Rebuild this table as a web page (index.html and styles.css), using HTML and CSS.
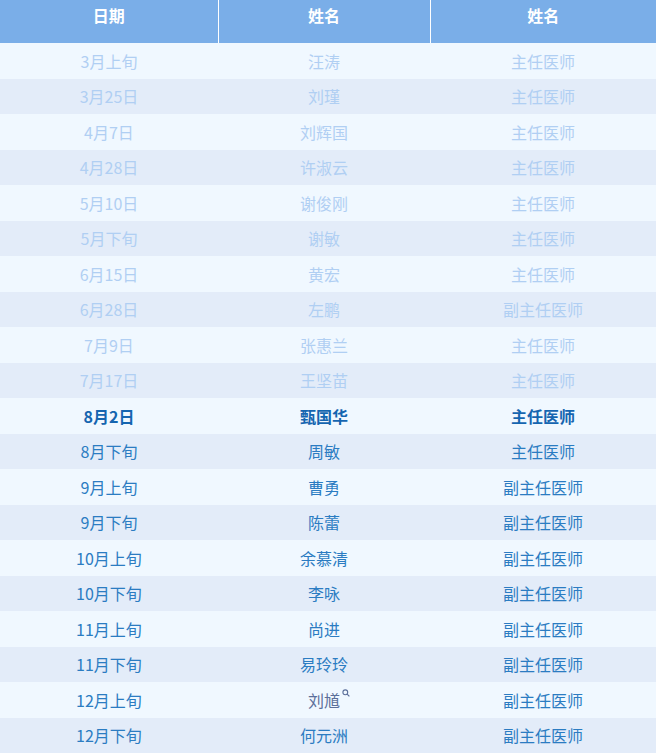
FILE: index.html
```html
<!DOCTYPE html>
<html lang="zh">
<head>
<meta charset="utf-8">
<link rel="stylesheet" href="styles.css">
</head>
<body>
<table class="sched">
  <colgroup><col class="c1"><col class="c2"><col class="c3"></colgroup>
  <thead>
    <tr><th>日期</th><th>姓名</th><th>姓名</th></tr>
  </thead>
  <tbody>
    <tr class="past"><td>3月上旬</td><td>汪涛</td><td>主任医师</td></tr>
    <tr class="past"><td>3月25日</td><td>刘瑾</td><td>主任医师</td></tr>
    <tr class="past"><td>4月7日</td><td>刘辉国</td><td>主任医师</td></tr>
    <tr class="past"><td>4月28日</td><td>许淑云</td><td>主任医师</td></tr>
    <tr class="past"><td>5月10日</td><td>谢俊刚</td><td>主任医师</td></tr>
    <tr class="past"><td>5月下旬</td><td>谢敏</td><td>主任医师</td></tr>
    <tr class="past"><td>6月15日</td><td>黄宏</td><td>主任医师</td></tr>
    <tr class="past"><td>6月28日</td><td>左鹏</td><td>副主任医师</td></tr>
    <tr class="past"><td>7月9日</td><td>张惠兰</td><td>主任医师</td></tr>
    <tr class="past"><td>7月17日</td><td>王坚苗</td><td>主任医师</td></tr>
    <tr class="now"><td>8月2日</td><td>甄国华</td><td>主任医师</td></tr>
    <tr><td>8月下旬</td><td>周敏</td><td>主任医师</td></tr>
    <tr><td>9月上旬</td><td>曹勇</td><td>副主任医师</td></tr>
    <tr><td>9月下旬</td><td>陈蕾</td><td>副主任医师</td></tr>
    <tr><td>10月上旬</td><td>余慕清</td><td>副主任医师</td></tr>
    <tr><td>10月下旬</td><td>李咏</td><td>副主任医师</td></tr>
    <tr><td>11月上旬</td><td>尚进</td><td>副主任医师</td></tr>
    <tr><td>11月下旬</td><td>易玲玲</td><td>副主任医师</td></tr>
    <tr><td>12月上旬</td><td><span class="link">刘馗<svg class="mag" width="8" height="8" viewBox="0 0 8 8"><circle cx="3.3" cy="3.3" r="2.4" fill="none" stroke="#5b6f9a" stroke-width="1.1"/><line x1="5.1" y1="5.1" x2="7.4" y2="7.4" stroke="#5b6f9a" stroke-width="1.2"/></svg></span></td><td>副主任医师</td></tr>
    <tr><td>12月下旬</td><td>何元洲</td><td>副主任医师</td></tr>
  </tbody>
</table>
</body>
</html>
```

FILE: styles.css
```css
html, body {
  margin: 0;
  padding: 0;
  background: #f0f8ff;
}
body {
  font-family: "Microsoft YaHei", "Noto Sans CJK SC", sans-serif;
}
.sched {
  width: 656px;
  border-collapse: collapse;
  table-layout: fixed;
}
.c1 { width: 218px; }
.c2 { width: 212px; }
.c3 { width: 226px; }
.sched th {
  height: 43px;
  padding: 0 0 14px 0;
  box-sizing: border-box;
  background: #7aaee8;
  color: #ffffff;
  font-size: 16px;
  font-weight: bold;
  text-align: center;
  vertical-align: middle;
  border-left: 1px solid #ffffff;
}
.sched th:first-child { border-left: none; }
.sched td {
  height: 35.5px;
  padding: 0;
  text-align: center;
  vertical-align: middle;
  font-size: 16px;
  color: #2b7cc2;
}
.sched tbody tr:nth-child(odd) td { background: #f0f8ff; }
.sched tbody tr:nth-child(even) td { background: #e3ecf9; }
.sched tr.past td { color: #b0cff3; }
.sched tr.now td { color: #1565b0; font-weight: bold; }
.link {
  color: #5b6f9a;
  position: relative;
}
.mag {
  position: absolute;
  right: -10px;
  top: 1px;
}
```
